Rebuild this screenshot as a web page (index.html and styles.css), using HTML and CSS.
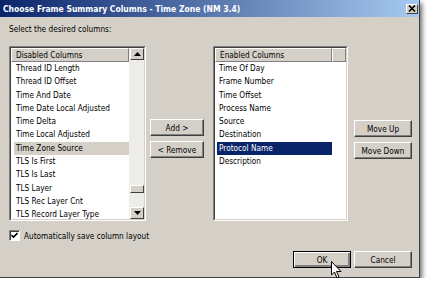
FILE: index.html
```html
<!DOCTYPE html>
<html lang="en">
<head>
    <meta charset="UTF-8">
    <title>Choose Frame Summary Columns</title>
    <link rel="stylesheet" href="styles.css">
</head>
<body>
    <div class="window">
        <div class="titlebar">
            <span class="title">Choose Frame Summary Columns - Time Zone (NM 3.4)</span>
            <span class="close">
                <svg width="8" height="7" viewBox="0 0 8 7"><path d="M1 0.5 L7 6.5 M7 0.5 L1 6.5" stroke="#000" stroke-width="1.6"/></svg>
            </span>
        </div>
        <div class="content">
            <div class="prompt">Select the desired columns:</div>
            <div class="columns">
                <div class="list list-left">
                    <div class="list-inner">
                        <div class="list-main">
                            <div class="header"><span class="hcell">Disabled Columns</span></div>
                            <div class="row">Thread ID Length</div>
                            <div class="row">Thread ID Offset</div>
                            <div class="row">Time And Date</div>
                            <div class="row">Time Date Local Adjusted</div>
                            <div class="row">Time Delta</div>
                            <div class="row">Time Local Adjusted</div>
                            <div class="row inactive">Time Zone Source</div>
                            <div class="row">TLS Is First</div>
                            <div class="row">TLS Is Last</div>
                            <div class="row">TLS Layer</div>
                            <div class="row">TLS Rec Layer Cnt</div>
                            <div class="row">TLS Record Layer Type</div>
                        </div>
                        <div class="scrollbar">
                            <div class="sb-btn"><svg width="7" height="4" viewBox="0 0 7 4"><path d="M3.5 0 L7 4 L0 4 Z" fill="#000"/></svg></div>
                            <div class="sb-track"></div>
                            <div class="sb-thumb"></div>
                            <div class="sb-rest"></div>
                            <div class="sb-btn"><svg width="7" height="4" viewBox="0 0 7 4"><path d="M0 0 L7 0 L3.5 4 Z" fill="#000"/></svg></div>
                        </div>
                    </div>
                </div>

                <div class="mid">
                    <div class="btn">Add &gt;</div>
                    <div class="btn">&lt; Remove</div>
                </div>

                <div class="list list-right">
                    <div class="list-inner list-col">
                        <div class="header">
                            <span class="hcell wide">Enabled Columns</span>
                            <span class="hcell"></span>
                        </div>
                        <div class="row">Time Of Day</div>
                        <div class="row">Frame Number</div>
                        <div class="row">Time Offset</div>
                        <div class="row">Process Name</div>
                        <div class="row">Source</div>
                        <div class="row">Destination</div>
                        <div class="row selected">Protocol Name</div>
                        <div class="row">Description</div>
                    </div>
                </div>

                <div class="side">
                    <div class="btn">Move Up</div>
                    <div class="btn">Move Down</div>
                </div>
            </div>

            <div class="check-row">
                <span class="checkbox">
                    <svg width="7" height="7" viewBox="0 0 7 7"><path d="M0.5 3 L2.5 5 L6.5 1" stroke="#000" stroke-width="1.6" fill="none"/></svg>
                </span>
                <span>Automatically save column layout</span>
            </div>

            <div class="footer">
                <div class="btn default">OK</div>
                <div class="btn">Cancel</div>
            </div>
        </div>
        <svg class="cursor" width="11" height="18" viewBox="0 0 11 18">
            <path d="M0.5 0.5 L0.5 14 L3.5 11 L6 17 L8 16 L5.5 10.5 L10 10.5 Z" fill="#fff" stroke="#000" stroke-width="1"/>
        </svg>
    </div>
</body>
</html>
```

FILE: styles.css
```css
body {
    margin: 0;
    background: #fff;
    font-family: "DejaVu Sans Condensed", "Liberation Sans", Arial, sans-serif;
    font-size: 8.2px;
    color: #000;
}
.window {
    position: relative;
    width: 420px;
    height: 278px;
    box-sizing: border-box;
    background: #d4d0c8;
    border-right: 1px solid #404040;
    border-bottom: 1px solid #404040;
    box-shadow: 2px 3px 5px rgba(0, 0, 0, 0.6);
    display: flex;
    flex-direction: column;
}
.titlebar {
    height: 17px;
    background: linear-gradient(to right, #0a246a, #a6caf0);
    display: flex;
    align-items: center;
    justify-content: space-between;
    padding: 0 1px 0 3px;
}
.title {
    color: #fff;
    font-weight: bold;
    font-size: 8.5px;
}
.close {
    width: 12px;
    height: 10px;
    box-sizing: border-box;
    background: #d4d0c8;
    border: 1px solid;
    border-color: #fff #404040 #404040 #fff;
    display: flex;
    align-items: center;
    justify-content: center;
}
.content {
    flex: 1;
    padding: 7px 7px 0 9px;
    display: flex;
    flex-direction: column;
}
.prompt {
    line-height: 10px;
    margin-bottom: 12px;
}
.columns {
    display: flex;
    height: 175px;
}
.list {
    box-sizing: border-box;
    border: 1px solid;
    border-color: #808080 #fff #fff #808080;
    background: #fff;
}
.list-inner {
    height: 100%;
    box-sizing: border-box;
    border: 1px solid;
    border-color: #404040 #d4d0c8 #d4d0c8 #404040;
    display: flex;
}
.list-col {
    flex-direction: column;
}
.list-left {
    width: 137px;
}
.list-right {
    width: 135px;
}
.list-main {
    flex: 1;
}
.header {
    display: flex;
    height: 14px;
}
.hcell {
    flex: 1;
    box-sizing: border-box;
    background: #d4d0c8;
    border: 1px solid;
    border-color: #fff #808080 #808080 #fff;
    line-height: 12px;
    padding-left: 4px;
}
.list-right .hcell.wide {
    flex: none;
    width: 117px;
}
.row {
    height: 13.3px;
    line-height: 13.3px;
    margin-left: 3px;
    padding-left: 2px;
    white-space: nowrap;
}
.list-right .row {
    margin-left: 2px;
    width: 113px;
}
.row.inactive {
    background: #d4d0c8;
}
.row.selected {
    background: #0a246a;
    color: #fff;
}
.scrollbar {
    width: 14px;
    display: flex;
    flex-direction: column;
    background: #eeece8;
    padding-left: 1px;
}
.sb-btn, .sb-thumb {
    box-sizing: border-box;
    background: #d4d0c8;
    border: 1px solid;
    border-color: #fff #404040 #404040 #fff;
    display: flex;
    align-items: center;
    justify-content: center;
}
.sb-btn {
    height: 12px;
}
.sb-track {
    flex: 1;
}
.sb-thumb {
    height: 8px;
}
.sb-rest {
    height: 14px;
}
.mid {
    width: 67px;
    box-sizing: border-box;
    padding: 73px 0 0 4px;
    display: flex;
    flex-direction: column;
    gap: 5px;
}
.side {
    padding: 74px 0 0 6px;
    display: flex;
    flex-direction: column;
    gap: 5px;
}
.btn {
    box-sizing: border-box;
    width: 54px;
    height: 17px;
    background: #d4d0c8;
    border: 1px solid;
    border-color: #fff #404040 #404040 #fff;
    box-shadow: inset -1px -1px #808080;
    display: flex;
    align-items: center;
    justify-content: center;
}
.side .btn, .footer .btn {
    width: 58px;
}
.check-row {
    display: flex;
    align-items: center;
    gap: 4px;
    margin-top: 9px;
    height: 11px;
}
.checkbox {
    width: 11px;
    height: 11px;
    box-sizing: border-box;
    background: #fff;
    border: 1px solid;
    border-color: #808080 #fff #fff #808080;
    box-shadow: inset 1px 1px #404040;
    display: flex;
    align-items: center;
    justify-content: center;
}
.footer {
    display: flex;
    justify-content: flex-end;
    gap: 3px;
    margin-top: 10px;
}
.btn.default {
    border: 1px solid #000;
    box-shadow: inset 1px 1px #fff, inset -2px -2px #808080, inset -1px -1px #404040;
}
.cursor {
    position: absolute;
    left: 331px;
    top: 261px;
}
```
